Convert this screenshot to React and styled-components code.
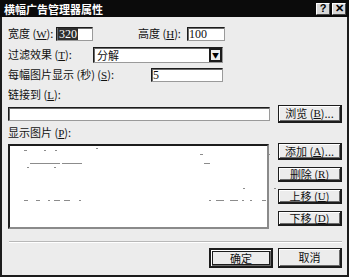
import * as React from 'react'
import styled, { createGlobalStyle } from 'styled-components'

const FACE = '#ececec'
const DARK = '#1c1c1c'
const SHADOW = '#6a6a6a'
const FONT = '"Noto Sans CJK SC", "Liberation Sans", sans-serif'

const GlobalStyle = createGlobalStyle`
    html, body {
        margin: 0;
        padding: 0;
        background: ${FACE};
    }
    #root {
        width: 349px;
        height: 277px;
    }
`

const Window = styled.div`
    box-sizing: border-box;
    width: 349px;
    height: 277px;
    background: ${FACE};
    border: 2px solid ${DARK};
    border-top: none;
    display: flex;
    flex-direction: column;
    font-family: ${FONT};
    font-size: 11px;
    color: #111;
`

const TitleBar = styled.div`
    height: 17px;
    margin: 0 -2px;
    background: #0b0b0b;
    display: flex;
    align-items: center;
    justify-content: space-between;
    padding: 0 3px 0 4px;
`

const Title = styled.span`
    color: #fff;
    font-weight: bold;
    font-size: 11px;
`

const TitleButtons = styled.div`
    display: flex;
    gap: 2px;
`

const TitleButton = styled.span`
    box-sizing: border-box;
    width: 14px;
    height: 12px;
    background: #d8d8d8;
    border: 1px solid #fff;
    border-right-color: #444;
    border-bottom-color: #444;
    display: flex;
    align-items: center;
    justify-content: center;
    font-family: "Liberation Sans", sans-serif;
    font-weight: bold;
    font-size: 11px;
    line-height: 1;
    color: #000;
`

const Body = styled.div`
    flex: 1;
    display: flex;
    flex-direction: column;
    padding: 0 5px 0 6px;
`

const Row = styled.div`
    display: flex;
    align-items: center;
    height: ${p => p.h}px;
    margin-top: ${p => p.mt}px;
`

const Label = styled.span`
    width: ${p => (p.w ? `${p.w}px` : 'auto')};
    flex-shrink: 0;
    white-space: nowrap;
    line-height: 1;
    font-size: 11px;
`

const Key = styled.u`
    font-family: "Liberation Serif", serif;
    font-size: 11px;
`

const Field = styled.div`
    box-sizing: border-box;
    width: ${p => p.w}px;
    height: ${p => p.h || 14}px;
    background: #fff;
    border: 1px solid ${DARK};
    border-right-color: #9a9a9a;
    border-bottom-color: #9a9a9a;
    box-shadow: inset 1px 1px 0 ${SHADOW};
    display: flex;
    align-items: center;
    padding-left: 1px;
    font-family: "Liberation Serif", serif;
    font-size: 12px;
    line-height: 1;
`

const Selected = styled.span`
    background: #2e2e2e;
    color: #fff;
    padding: 0 1px;
`

const Select = styled(Field)`
    padding-left: 3px;
    font-family: ${FONT};
    font-size: 11px;
    justify-content: space-between;
    padding-right: 0;
`

const DropButton = styled.span`
    box-sizing: border-box;
    width: 13px;
    height: 14px;
    border: 2px solid ${DARK};
    background: ${FACE};
    display: flex;
    align-items: center;
    justify-content: center;
    font-size: 7px;
    color: #000;
`

const Button = styled.div`
    box-sizing: border-box;
    width: 64px;
    height: ${p => p.h || 17}px;
    background: ${FACE};
    border: 1px solid ${DARK};
    border-width: ${p => (p.primary ? '2px' : '1px 2px 2px 1px')};
    box-shadow: inset 1px 1px 0 #fff, inset -1px -1px 0 ${SHADOW};
    outline: ${p => (p.primary ? `1px solid ${DARK}` : 'none')};
    outline-offset: -4px;
    display: flex;
    align-items: center;
    justify-content: center;
    white-space: nowrap;
    font-size: 11px;
    line-height: 1;
`

const ListArea = styled.div`
    display: flex;
    margin-top: 4px;
    gap: 9px;
`

const ListBox = styled.div`
    box-sizing: border-box;
    width: 262px;
    height: 85px;
    background: #fff;
    border: 2px solid ${DARK};
    border-right-color: #8a8a8a;
    border-bottom-color: #8a8a8a;
    position: relative;
`

const Speck = styled.span`
    position: absolute;
    height: 1px;
    background: #8c8c8c;
`

const SideButtons = styled.div`
    display: flex;
    flex-direction: column;
    gap: 7px;
    margin-top: -1px;
`

const Separator = styled.div`
    margin-top: 12px;
    margin-left: 1px;
    height: 1px;
    background: #b8b8b8;
    border-bottom: 1px solid #fff;
`

const Footer = styled.div`
    display: flex;
    justify-content: flex-end;
    gap: 5px;
    margin-top: 5px;
`

const specks = [
    [14, 4, 3], [34, 4, 2], [45, 4, 2], [86, 2, 2], [190, 8, 3], [258, 8, 2],
    [20, 17, 30], [38, 17, 8], [52, 17, 20], [194, 17, 6],
    [17, 21, 2], [44, 21, 2], [233, 42, 2], [264, 42, 2],
    [14, 54, 4], [26, 54, 4], [38, 54, 2], [44, 54, 6], [54, 54, 6], [69, 54, 2],
    [199, 54, 2], [206, 54, 8], [220, 54, 8], [232, 54, 2], [240, 54, 2], [252, 54, 4]
]

const App = () => {
    return (
        <>
            <GlobalStyle />
            <Window>
                <TitleBar>
                    <Title>横幅广告管理器属性</Title>
                    <TitleButtons>
                        <TitleButton>?</TitleButton>
                        <TitleButton>✕</TitleButton>
                    </TitleButtons>
                </TitleBar>
                <Body>
                    <Row h={14} mt={10}>
                        <Label w={48}>宽度 (<Key>W</Key>):</Label>
                        <Field w={37}><Selected>320</Selected></Field>
                        <Label w={49} style={{ marginLeft: 45 }}>高度 (<Key>H</Key>):</Label>
                        <Field w={38}>100</Field>
                    </Row>
                    <Row h={16} mt={6}>
                        <Label w={85}>过滤效果 (<Key>T</Key>):</Label>
                        <Select w={130} h={16}>
                            分解
                            <DropButton>▼</DropButton>
                        </Select>
                    </Row>
                    <Row h={14} mt={5}>
                        <Label w={143}>每幅图片显示 (秒) (<Key>S</Key>):</Label>
                        <Field w={72}>5</Field>
                    </Row>
                    <Row h={14} mt={6}>
                        <Label>链接到 (<Key>L</Key>):</Label>
                    </Row>
                    <Row h={18} mt={3} style={{ gap: 8 }}>
                        <Field w={262}></Field>
                        <Button h={18}>浏览 (<Key>B</Key>)...</Button>
                    </Row>
                    <Row h={14} mt={3}>
                        <Label>显示图片 (<Key>P</Key>):</Label>
                    </Row>
                    <ListArea>
                        <ListBox>
                            {specks.map(([x, y, w], i) => (
                                <Speck key={i} style={{ left: x, top: y, width: w }} />
                            ))}
                        </ListBox>
                        <SideButtons>
                            <Button>添加 (<Key>A</Key>)...</Button>
                            <Button h={15}>删除 (<Key>R</Key>)</Button>
                            <Button h={15}>上移 (<Key>U</Key>)</Button>
                            <Button h={15}>下移 (<Key>D</Key>)</Button>
                        </SideButtons>
                    </ListArea>
                    <Separator />
                    <Footer>
                        <Button primary h={20}>确定</Button>
                        <Button h={20}>取消</Button>
                    </Footer>
                </Body>
            </Window>
        </>
    )
}

export default App
